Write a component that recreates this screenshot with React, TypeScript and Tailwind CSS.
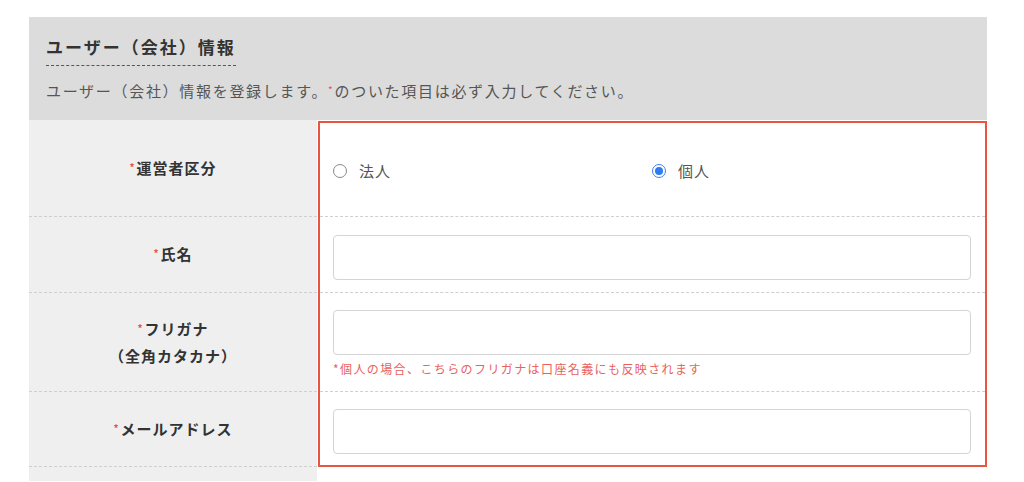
import React, { useState } from 'react';

const font = { fontFamily: '"Noto Sans CJK JP", "Noto Sans", sans-serif' };

function Req() {
  return <span className="text-[#e5534b] text-[10px] relative -top-[3px] mr-[1px]">*</span>;
}

export default function App() {
  const [kind, setKind] = useState("individual");

  return (
    <div style={font} className="w-[1024px] h-[482px] overflow-hidden bg-white pt-[17px] pl-[29px]">
      <div className="w-[958px]">
        {/* Header */}
        <div className="bg-[#dcdcdc] pt-[18px] pb-[15px] px-[17px]">
          <h2 className="inline-block border-b border-dashed border-[#555] pb-[6px] text-[17px] leading-[24px] font-bold tracking-[2px] text-[#333]">
            ユーザー（会社）情報
          </h2>
          <p className="mt-[13px] text-[15px] leading-[24px] tracking-[1.7px] text-[#555]">
            ユーザー（会社）情報を登録します。<span className="text-[#e5534b] text-[10px] relative -top-[3px]">*</span>のついた項目は必ず入力してください。
          </p>
        </div>

        <div className="flex">
          {/* Label column */}
          <div className="w-[288px] h-[361px] bg-[#efefef] flex flex-col text-[15px] font-bold tracking-[1px] text-[#333]">
            <div className="h-[97px] border-b border-dashed border-[#cfcfcf] flex items-center justify-center">
              <span><Req />運営者区分</span>
            </div>
            <div className="h-[76px] border-b border-dashed border-[#cfcfcf] flex items-center justify-center">
              <span><Req />氏名</span>
            </div>
            <div className="h-[99px] border-b border-dashed border-[#cfcfcf] flex flex-col items-center justify-center leading-[25px]">
              <span><Req />フリガナ</span>
              <span>（全角カタカナ）</span>
            </div>
            <div className="h-[75px] border-b border-dashed border-[#cfcfcf] flex items-center justify-center">
              <span><Req />メールアドレス</span>
            </div>
          </div>

          {/* Field column */}
          <div className="flex-1 ml-px mt-px">
            <div className="border-2 border-[#ea5540] bg-white">
              <div className="h-[94px] border-b border-dashed border-[#cfcfcf] pl-[13px] pr-[14px] pt-[3px] grid grid-cols-2 items-center text-[15px] tracking-[1px] text-[#555]">
                <label className="flex items-center gap-[12px] cursor-pointer" onClick={() => setKind("corp")}>
                  {kind === "corp" ? (
                    <span className="w-[14px] h-[14px] rounded-full border-[1.5px] border-[#3b82f6] flex items-center justify-center">
                      <span className="w-[8px] h-[8px] rounded-full bg-[#2f7bf5]" />
                    </span>
                  ) : (
                    <span className="w-[14px] h-[14px] rounded-full border border-[#8a8a8a] bg-white" />
                  )}
                  法人
                </label>
                <label className="flex items-center gap-[12px] cursor-pointer" onClick={() => setKind("individual")}>
                  {kind === "individual" ? (
                    <span className="w-[14px] h-[14px] rounded-full border-[1.5px] border-[#3b82f6] flex items-center justify-center">
                      <span className="w-[8px] h-[8px] rounded-full bg-[#2f7bf5]" />
                    </span>
                  ) : (
                    <span className="w-[14px] h-[14px] rounded-full border border-[#8a8a8a] bg-white" />
                  )}
                  個人
                </label>
              </div>
              <div className="h-[76px] border-b border-dashed border-[#cfcfcf] pl-[13px] pr-[14px] pt-[18px]">
                <input className="w-full h-[45px] border border-[#d4d4d4] rounded-[4px] px-3 outline-none" />
              </div>
              <div className="h-[99px] border-b border-dashed border-[#cfcfcf] pl-[13px] pr-[14px] pt-[17px]">
                <input className="w-full h-[45px] border border-[#d4d4d4] rounded-[4px] px-3 outline-none" />
                <p className="mt-[6px] text-[12px] leading-[16px] tracking-[1.4px] text-[#e8625e]">
                  *個人の場合、こちらのフリガナは口座名義にも反映されます
                </p>
              </div>
              <div className="h-[73px] pl-[13px] pr-[14px] pt-[17px]">
                <input className="w-full h-[45px] border border-[#d4d4d4] rounded-[4px] px-3 outline-none" />
              </div>
            </div>
          </div>
        </div>
      </div>
    </div>
  );
}
